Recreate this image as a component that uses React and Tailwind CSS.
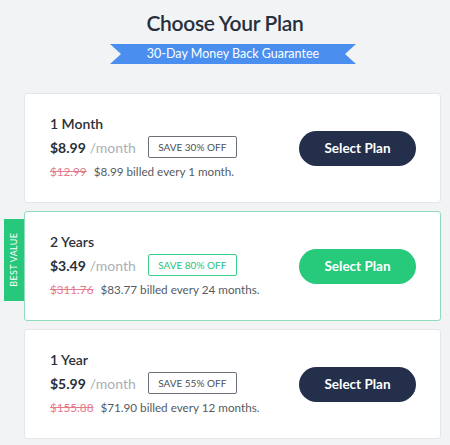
import React from 'react';

const plans = [
    { name: '1 Month', price: '$8.99', save: 'SAVE 30% OFF', old: '$12.99', billed: '$8.99 billed every 1 month.', best: false },
    { name: '2 Years', price: '$3.49', save: 'SAVE 80% OFF', old: '$311.76', billed: '$83.77 billed every 24 months.', best: true },
    { name: '1 Year', price: '$5.99', save: 'SAVE 55% OFF', old: '$155.88', billed: '$71.90 billed every 12 months.', best: false },
];

const PlanCard = ({ plan }) => (
    <div className={`relative h-[110px] bg-white rounded-[3px] flex items-center justify-between pl-[25px] pr-[24px] border ${plan.best ? 'border-[#8fdcba]' : 'border-[#e3e6ea]'}`}>
        {plan.best && (
            <div className="absolute left-[-21px] top-[7px] w-[20px] h-[82px] bg-[#27c77c] flex items-center justify-center">
                <span className="block -rotate-90 whitespace-nowrap text-white text-[9px] tracking-[0.3px]">BEST VALUE</span>
            </div>
        )}
        <div className="flex flex-col self-start pt-[20px]">
            <div className="text-[14px] font-semibold text-[#2b2f36] leading-[20px]">{plan.name}</div>
            <div className="flex items-center mt-[2px]">
                <span className="text-[14px] font-bold text-[#2b2f36]">{plan.price}</span>
                <span className="text-[14px] text-[#a9afb6] ml-[4px]">/month</span>
                <span className={`ml-[12px] h-[22px] w-[89px] flex items-center justify-center rounded-[2px] border text-[10px] ${plan.best ? 'border-[#3ccf8c] text-[#2bbf7a]' : 'border-[#6b7078] text-[#4a4f57]'}`}>{plan.save}</span>
            </div>
            <div className="flex items-center mt-[5px] text-[11.7px] leading-[16px]">
                <span className="line-through text-[#e57a8a]">{plan.old}</span>
                <span className="ml-[7px] text-[#555b63]">{plan.billed}</span>
            </div>
        </div>
        <button className={`w-[117px] h-[35px] rounded-full text-white text-[13.5px] font-bold ${plan.best ? 'bg-[#27c97b]' : 'bg-[#232f4b]'}`}>
            Select Plan
        </button>
    </div>
);

const App = () => {
    return (
        <div className="w-[450px] h-[445px] bg-[#f2f3f5] overflow-hidden" style={{ fontFamily: 'Lato, "Open Sans", sans-serif' }}>
            <h1 className="pt-[8px] text-center text-[21px] font-semibold tracking-[-0.3px] text-[#26303d] leading-[30px]">Choose Your Plan</h1>
            <div className="flex mt-[6px] pl-[110px]">
                <div className="relative w-[246px] h-[20px] flex items-center justify-center">
                    <svg className="absolute inset-0" width="246" height="20" viewBox="0 0 246 20">
                        <polygon points="0,0 246,0 235,10 246,20 0,20 11,10" fill="#4a8ff0" />
                    </svg>
                    <span className="relative text-white text-[12.5px]">30-Day Money Back Guarantee</span>
                </div>
            </div>
            <div className="ml-[24px] w-[417px] mt-[29px] flex flex-col gap-[8px]">
                {plans.map(p => <PlanCard key={p.name} plan={p} />)}
            </div>
        </div>
    );
};

export default App;
